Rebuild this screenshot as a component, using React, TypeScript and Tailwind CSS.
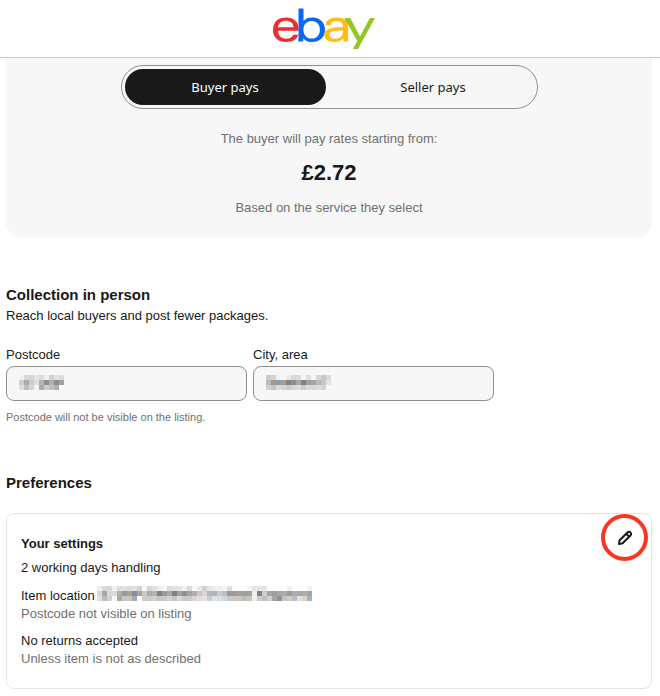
import React from 'react';

const POSTCODE_CELLS = [
  ['#f3f1ee', '#d9dcdf', '#dad5d2', '#dde8f0', '#dfdcd8', '#eef0f2', '#ced3d9', '#e6e3de', '#d8dde0'],
  ['#d2cdc9', '#a6abb0', '#d2cac4', '#d8e0e8', '#bcb3a8', '#8b8f9c', '#b8ada6', '#8a8e9a', '#a0a4a8'],
  ['#e2dfdd', '#b8bec4', '#d4d4d2', '#f4f6f7', '#aeaaa6', '#cfcdc9', '#c2c0bb', '#aab0b8', '#f7f7f7'],
];

const CITY_CELLS = [
  ['#cfccca', '#d5d3d0', '#eef3f5', '#f7f7f7', '#efe9e6', '#d4d9dc', '#dcdcda', '#f4f6f7', '#dde0e2', '#f5f5f5', '#dcd5d0', '#cbc7c4', '#d4dce4'],
  ['#bdb9b6', '#a39791', '#8d9ca6', '#a59d97', '#86827f', '#84929b', '#b0a59e', '#808285', '#9ba3a5', '#a2a5a7', '#b5bac0', '#cbc6c3', '#e0e8ef'],
  ['#d2d0ce', '#c5c5c5', '#d8dde0', '#d8d4d0', '#cdcac8', '#d4dade', '#dedcd9', '#c7cbce', '#d8dce0', '#d9d7d5', '#dedcda', '#d8d3cf', '#f7f7f7'],
];

const LOCATION_CELLS = [
  ['#f4efec', '#dad7d5', '#d6dade', '#f0f1f2', '#dde0e3', '#e4e0dc', '#d9dde2', '#e5e0dc', '#cfd4da', '#f5f5f5', '#d6d4d1', '#dfe3e7', '#f0eeec', '#f7f8f9', '#dcdcdc', '#dde2e6', '#e2e4e6', '#f4f2f0', '#d8dce0', '#f8f8f8', '#ecebea', '#d3d2d1', '#e2e6ea', '#f0eeec', '#eaf1f6', '#f5f2ef', '#dce0e3', '#fafafa', '#fdfdfd', '#fdfdfd', '#f4f4f4', '#e4e7ea', '#e4e7e4', '#e2e6ea', '#fdfdfd', '#fdfdfd', '#fdfdfd', '#fdfdfd', '#f0f0f0', '#fdfdfd', '#fdfdfd', '#fdfdfd', '#f0f2f5'],
  ['#ded8d4', '#a9a6ab', '#dbd8d2', '#d0dde5', '#b7aea6', '#959ba5', '#a9a29c', '#8a8d98', '#a6a5a3', '#cfc6c0', '#a8adb4', '#b5b3aa', '#86818b', '#a09994', '#aaa9a8', '#837f80', '#9ba4aa', '#95908d', '#9da5a8', '#b0adaa', '#bfc9cf', '#e0d4cc', '#b4b7ba', '#a9b5bb', '#d3c9c1', '#b5c0c6', '#949aa3', '#9f9b97', '#9fa2a4', '#a39d99', '#a4a19e', '#edf2e6', '#7f8090', '#cbcdd0', '#aaa49c', '#a29b98', '#a3a9b3', '#a7abad', '#9f9a96', '#adadb1', '#a9a9a8', '#b4aba2', '#9ea8b4'],
  ['#e3e1df', '#b8bcc3', '#d2d0cd', '#f6f7f7', '#aaa6a2', '#c5c8cb', '#c7c4c0', '#a4a8b0', '#fbfbfb', '#d0cac5', '#c9cbce', '#d5d2cc', '#c7c5c3', '#c9c9c9', '#d4d1ce', '#c6c6c7', '#d4dade', '#c9c6c3', '#c6cbce', '#d9d6d3', '#dce0e2', '#e7e2df', '#c8cdd1', '#dce2e6', '#dedbd8', '#d4d8dc', '#c5cad0', '#cbc8c5', '#c5c8cb', '#bfbcba', '#c8c6c4', '#eef2e8', '#c8cad0', '#bfc2c5', '#ced1d4', '#a9a7a4', '#8f949c', '#c5c3c0', '#d0ccc8', '#b9bcc2', '#dfe1e4', '#dfd2c8', '#a7afb9'],
];

function Redacted({ cells, label }: { cells: string[][]; label: string }) {
  return (
    <svg
      role="img"
      aria-label={label}
      width={cells[0].length * 5}
      height={cells.length * 5}
      shapeRendering="crispEdges"
      className="shrink-0"
    >
      {cells.map((row, y) =>
        row.map((fill, x) => <rect key={`${x}-${y}`} x={x * 5} y={y * 5} width="5" height="5" fill={fill} />)
      )}
    </svg>
  );
}

function EbayLogo() {
  return (
    <svg role="img" aria-label="ebay" viewBox="0 0 102 42" width="102" height="42">
      <g fillRule="evenodd">
        <path
          fill="#f12c2d"
          d="M0 22C0 14 5 9.500 13 9.500C20.500 9.500 25.500 13.500 25.500 20.500V22.800H5C5.300 28 8.300 30.800 13.200 30.800C16.800 30.800 19.400 29.300 20.200 26.800H25.200C24 31.600 19.500 34 13 34C5 34 0 29.500 0 22ZM5 19.300H20.500C20.300 15 17.500 12.800 13 12.800C8.400 12.800 5.500 15.300 5 19.300Z"
        />
        <path
          fill="#0968f6"
          d="M25.500 0.500H30.500V13C32.500 10.600 35.600 9.500 39.500 9.500C47 9.500 52 14.500 52 21.800C52 29 47 34 39.500 34C35.600 34 32.400 32.800 30.300 30.400L30.100 33.400H25.300L25.500 29ZM38.700 13C33.500 13 30.400 16.600 30.400 21.800C30.400 27 33.500 30.600 38.700 30.600C43.900 30.600 46.900 27 46.900 21.800C46.900 16.600 43.900 13 38.700 13Z"
        />
        <path
          fill="#ffbd14"
          d="M52.500 17.200C53 12 57.500 9.500 64 9.500C71.500 9.500 75 12.300 75 18V28L75.300 33.400H70.500L70.300 30.200C68 33 65 34 61 34C55 34 51.300 31.200 51.300 26.800C51.300 21 56.500 19.200 70 19.200C70 14.500 68.300 12.900 63.500 12.900C60 12.900 57.900 14.300 57.500 17.200ZM70 22.400C60 22.400 56.400 23.200 56.400 26.600C56.400 29.200 58.500 30.800 62 30.800C67 30.800 70 28 70 23.500Z"
        />
      </g>
      <path fill="#92c821" d="M71.500 10H77.200L87 28.600L96.800 10H102L85 41H79.800L84.200 33Z" />
    </svg>
  );
}

function PencilIcon() {
  return (
    <svg width="16" height="16" viewBox="0 0 16 16" fill="none" stroke="#191919" strokeWidth="2" strokeLinejoin="round" aria-hidden="true">
      <path d="M10.500 2.500C11.500 1.500 12.700 1.700 13.400 2.400C14.100 3.100 14.500 4.500 13.500 5.500L5.600 13.200L2 14L2.600 10.300Z" />
      <path d="M9.500 4L12 6.500" />
    </svg>
  );
}

const fieldBox = 'relative flex h-[35px] items-center rounded-lg border border-[#8f8f8f] bg-[#f7f7f7]';

function RedactedField({ id, label, cells }: { id: string; label: string; cells: string[][] }) {
  return (
    <div className="min-w-0 flex-1">
      <label htmlFor={id} className="mb-[1px] block leading-5">{label}</label>
      <div className={fieldBox}>
        <input id={id} readOnly className="h-full w-full rounded-lg px-3 outline-offset-2" />
        <span className="pointer-events-none absolute top-2 left-3">
          <Redacted cells={cells} label={`${label} hidden`} />
        </span>
      </div>
    </div>
  );
}

export default function App() {
  return (
    <div className="min-h-screen bg-white font-['Liberation_Sans',Arial,sans-serif] text-[13px] text-[#191919]">
      <header className="flex h-[58px] justify-center border-b border-[#c7c7c7] pt-2 pr-3">
        <EbayLogo />
      </header>

      <main className="pr-2 pl-[6px]">
        <section className="rounded-b-2xl bg-[#f7f7f7] pt-[7px] pb-5 text-center text-[#707070]">
          <div className="mx-auto flex h-11 w-[417px] max-w-full gap-[7px] rounded-full border border-[#8f8f8f] p-[3px] font-['Noto_Sans',sans-serif] text-[#191919]">
            <button type="button" aria-pressed="true" className="flex-1 rounded-full bg-[#191919] pt-[2px] text-white">Buyer pays</button>
            <button type="button" aria-pressed="false" className="flex-1 rounded-full pt-[2px]">Seller pays</button>
          </div>
          <p className="mt-5 leading-5">The buyer will pay rates starting from:</p>
          <p className="mt-2 text-[22px] leading-8 font-bold text-[#191919]">£2.72</p>
          <p className="mt-[9px] leading-5">Based on the service they select</p>
        </section>

        <section className="mt-[45px]">
          <h2 className="text-[15px] leading-6 font-bold">Collection in person</h2>
          <p className="leading-[18px]">Reach local buyers and post fewer packages.</p>
          <div className="mt-5 flex w-[488px] max-w-full gap-[6px]">
            <RedactedField id="postcode" label="Postcode" cells={POSTCODE_CELLS} />
            <RedactedField id="city" label="City, area" cells={CITY_CELLS} />
          </div>
          <p className="mt-2 text-[11px] leading-4 text-[#707070]">Postcode will not be visible on the listing.</p>
        </section>

        <section className="mt-[46px]">
          <h2 className="text-[15px] leading-6 font-bold">Preferences</h2>
          <div className="relative mt-[18px] rounded-lg border border-[#e5e5e5] px-[14px] pt-5 pb-[21px]">
            <button
              type="button"
              aria-label="Edit preferences"
              className="absolute top-0 right-[3px] flex size-[47px] items-center justify-center rounded-full border-4 border-[#fc3521]"
            >
              <PencilIcon />
            </button>
            <h3 className="leading-5 font-bold">Your settings</h3>
            <p className="mt-1 leading-5">2 working days handling</p>
            <div className="mt-2">
              <p className="flex items-start gap-[2px] leading-5">
                Item location
                <Redacted cells={LOCATION_CELLS} label="Location hidden" />
              </p>
              <p className="leading-[15px] text-[#707070]">Postcode not visible on listing</p>
            </div>
            <div className="mt-[10px]">
              <p className="leading-5">No returns accepted</p>
              <p className="leading-4 text-[#707070]">Unless item is not as described</p>
            </div>
          </div>
        </section>
      </main>
    </div>
  );
}
